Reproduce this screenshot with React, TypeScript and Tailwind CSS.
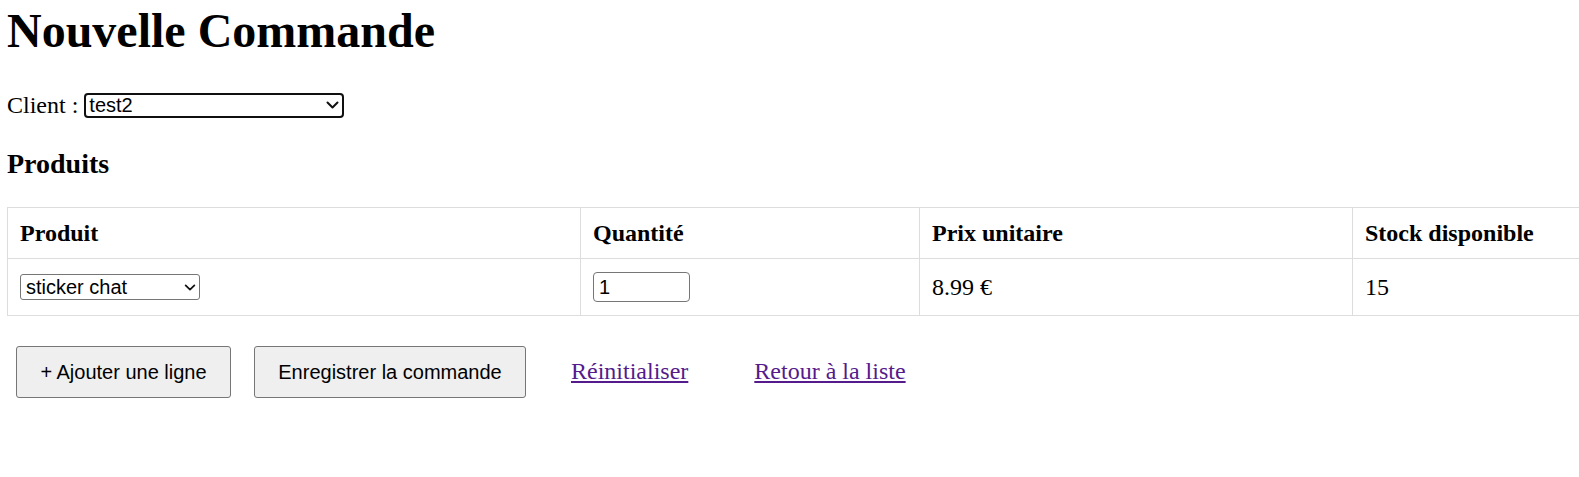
import React, { useState } from 'react';

type Ligne = { produit: string; quantite: number; prix: number; stock: number };

const Chevron: React.FC<{ className?: string }> = ({ className }) => (
  <svg className={className} viewBox="0 0 13 8" fill="none" stroke="#111" strokeWidth="2" strokeLinecap="round" strokeLinejoin="round">
    <polyline points="1.5,1.5 6.5,6.5 11.5,1.5" />
  </svg>
);

const NouvelleCommande: React.FC = () => {
  const [client, setClient] = useState('test2');
  const [lignes, setLignes] = useState<Ligne[]>([{ produit: 'sticker chat', quantite: 1, prix: 8.99, stock: 15 }]);

  const updateQuantite = (index: number, value: string) => {
    setLignes(prev => prev.map((l, i) => (i === index ? { ...l, quantite: Number(value) } : l)));
  };

  return (
    <div className="w-full overflow-hidden bg-white pl-[7px] font-['Liberation_Serif',serif] text-black">
      <h1 className="mt-[3px] text-[48px] font-bold leading-[55px]">Nouvelle Commande</h1>

      <div className="mt-[34px] flex items-center">
        <label className="pb-[1px] text-[24px] leading-[26px] pr-[6px]">Client :</label>
        <div className="relative">
          <select
            value={client}
            onChange={e => setClient(e.target.value)}
            className="h-[25px] w-[260px] appearance-none rounded-[4px] border-2 border-[#101010] bg-white pl-[3px] font-['Liberation_Sans',Arial,sans-serif] text-[20px] leading-[21px] text-black outline-none"
          >
            <option value="test1">test1</option>
            <option value="test2">test2</option>
          </select>
          <Chevron className="pointer-events-none absolute right-[5px] top-[8px] h-[8px] w-[13px]" />
        </div>
      </div>

      <h3 className="mt-[29px] text-[28px] font-bold leading-[32px]">Produits</h3>

      <table className="mt-[27px] w-[1645px] max-w-none table-fixed border-collapse text-[24px]">
        <colgroup>
          <col className="w-[573px]" />
          <col className="w-[339px]" />
          <col className="w-[433px]" />
          <col className="w-[300px]" />
        </colgroup>
        <thead>
          <tr>
            {['Produit', 'Quantité', 'Prix unitaire', 'Stock disponible'].map(h => (
              <th key={h} className="border border-[#dddddd] px-[12px] py-[12px] text-left font-bold leading-[26px]">
                {h}
              </th>
            ))}
          </tr>
        </thead>
        <tbody>
          {lignes.map((ligne, index) => (
            <tr key={index}>
              <td className="border border-[#dddddd] px-[12px] py-[13px] align-middle">
                <div className="relative w-[180px]">
                  <select
                    value={ligne.produit}
                    onChange={() => {}}
                    className="block h-[26px] w-[180px] appearance-none rounded-[3px] border border-[#767676] bg-white pl-[5px] font-['Liberation_Sans',Arial,sans-serif] text-[20px] leading-[22px] text-black outline-none"
                  >
                    <option value="sticker chat">sticker chat</option>
                  </select>
                  <Chevron className="pointer-events-none absolute right-[4px] top-[10px] h-[7px] w-[12px]" />
                </div>
              </td>
              <td className="border border-[#dddddd] px-[12px] py-[13px] align-middle">
                <input
                  type="text"
                  value={ligne.quantite}
                  onChange={e => updateQuantite(index, e.target.value)}
                  className="block h-[30px] w-[97px] rounded-[4px] border border-[#767676] px-[5px] font-['Liberation_Sans',Arial,sans-serif] text-[20px] text-black outline-none"
                />
              </td>
              <td className="border border-[#dddddd] px-[12px] py-[13px] align-middle leading-[28px]">
                {ligne.prix.toFixed(2)} €
              </td>
              <td className="border border-[#dddddd] px-[12px] py-[13px] align-middle leading-[28px]">{ligne.stock}</td>
            </tr>
          ))}
        </tbody>
      </table>

      <div className="mt-[30px] flex items-baseline pb-[30px]">
        <button
          onClick={() => setLignes(prev => [...prev, { produit: 'sticker chat', quantite: 1, prix: 8.99, stock: 15 }])}
          className="ml-[9px] w-[215px] rounded-[3px] border border-[#767676] bg-[#efefef] py-[13px] text-center font-['Liberation_Sans',Arial,sans-serif] text-[20px] leading-[24px] text-black"
        >
          + Ajouter une ligne
        </button>
        <button className="ml-[23px] w-[272px] rounded-[3px] border border-[#767676] bg-[#efefef] py-[13px] text-center font-['Liberation_Sans',Arial,sans-serif] text-[20px] leading-[24px] text-black">
          Enregistrer la commande
        </button>
        <a href="#" className="ml-[45px] text-[24px] text-[#551a8b] underline">
          Réinitialiser
        </a>
        <a href="#" className="ml-[66px] text-[24px] text-[#551a8b] underline">
          Retour à la liste
        </a>
      </div>
    </div>
  );
};

export default function App() {
  return <NouvelleCommande />;
}
